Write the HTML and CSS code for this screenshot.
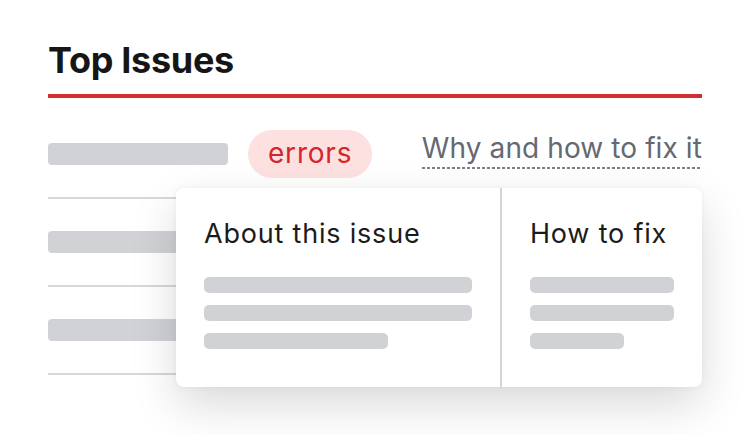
FILE: index.html
```html
<!DOCTYPE html>
<html lang="en">
<head>
    <meta charset="UTF-8">
    <meta name="viewport" content="width=device-width, initial-scale=1.0">
    <title>Top Issues</title>
    <link rel="stylesheet" href="styles.css">
</head>
<body>
    <div class="panel">
        <h1 class="panel-title">Top Issues</h1>
        <div class="issues">
            <div class="issue">
                <span class="bar"></span>
                <span class="tag">errors</span>
                <a class="why" href="#">Why and how to fix it</a>
            </div>
            <div class="issue">
                <span class="bar"></span>
            </div>
            <div class="issue">
                <span class="bar"></span>
            </div>

            <!-- popup opened from the "why" link -->
            <div class="popup">
                <div class="popup-col">
                    <h2>About this issue</h2>
                    <span class="line" style="width: 268px"></span>
                    <span class="line" style="width: 268px"></span>
                    <span class="line" style="width: 184px"></span>
                </div>
                <div class="popup-col">
                    <h2>How to fix</h2>
                    <span class="line" style="width: 144px"></span>
                    <span class="line" style="width: 144px"></span>
                    <span class="line" style="width: 94px"></span>
                </div>
            </div>
        </div>
    </div>
</body>
</html>
```

FILE: styles.css
```css
*{margin: 0;padding: 0;box-sizing: border-box;}
body {
    background: #fff;
    font-family: Inter, "Liberation Sans", sans-serif;
    color: #1a1a1a;
}
.panel {
    width: 654px;
    margin-left: 48px;
    padding: 38px 0 60px;
}
.panel-title {
    font-size: 36px;
    line-height: 44px;
    font-weight: 700;
    letter-spacing: -0.3px;
    color: #161616;
    padding-bottom: 12px;
    border-bottom: 4px solid #d32f2f;
}
.issues {
    position: relative;
    margin-top: 13px;
}
.issue {
    height: 88px;
    display: flex;
    align-items: center;
    gap: 20px;
    border-bottom: 2px solid #d8d8db;
}
.bar {
    width: 180px;
    height: 22px;
    border-radius: 4px;
    background: #d1d2d6;
}
.tag {
    height: 48px;
    padding: 0 20px;
    border-radius: 24px;
    background: #fde1e1;
    color: #d3262c;
    font-size: 28px;
    line-height: 46px;
    letter-spacing: 0.8px;
}
.why {
    margin-left: auto;
    margin-bottom: 8px;
    padding-bottom: 4px;
    font-size: 28px;
    line-height: 34px;
    letter-spacing: 0.1px;
    color: #656972;
    text-decoration: none;
    background: repeating-linear-gradient(90deg, #7d8088 0 3px, transparent 3px 5px) left bottom / 100% 2px no-repeat;
}
.popup {
    position: absolute;
    top: 77px;
    right: 0;
    width: 526px;
    height: 199px;
    display: grid;
    grid-template-columns: 324px 1fr;
    background: #fff;
    border-radius: 8px;
    box-shadow: 0 0 6px rgba(0, 0, 0, .05), 0 18px 46px rgba(0, 0, 0, .15);
}
.popup-col {
    display: flex;
    flex-direction: column;
    gap: 12px;
    padding: 30px 28px 0;
}
.popup-col + .popup-col {
    border-left: 2px solid #d4d4d6;
}
.popup-col h2 {
    font-size: 27px;
    line-height: 32px;
    font-weight: 400;
    letter-spacing: 0.8px;
    color: #1b1b1b;
    margin-bottom: 15px;
}
.line {
    height: 16px;
    border-radius: 5px;
    background: #d1d2d6;
}
```
